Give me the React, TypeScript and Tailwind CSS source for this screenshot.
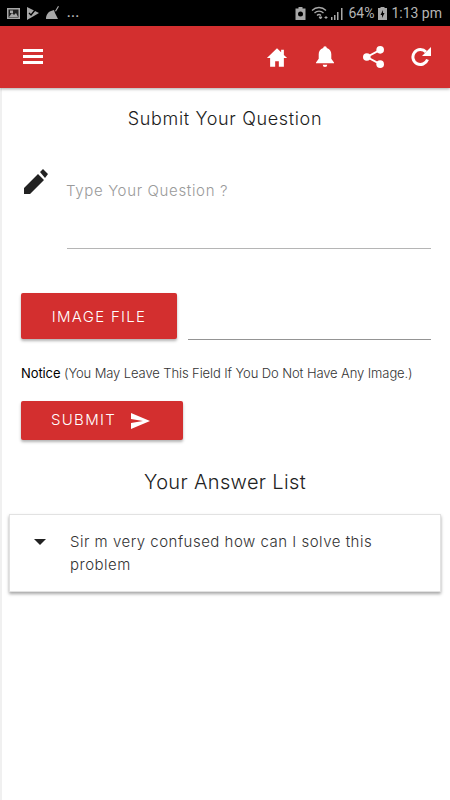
import React from "react";

const F = "font-['Inter','Open_Sans',sans-serif]";

function StatusBar() {
  return (
    <div className="h-[26px] bg-black flex items-center justify-between pl-[7px] pr-[8px] text-[#b5b5b5]">
      <div className="flex items-center gap-[7px]">
        <svg width="13" height="13" viewBox="0 0 13 13"><path fill="#a8a8a8" d="M0 1h13v11H0z" /><path fill="#222" d="M1.500 2.500h10v8h-10z" /><path fill="#a8a8a8" d="M2 10l3-4 2 2 2-2 2 4zM3 3.500h3V6H3z" /></svg>
        <svg width="12" height="13" viewBox="0 0 12 13"><path fill="#a8a8a8" d="M0 0l12 6-12 7z" /><path stroke="#000" strokeWidth="1.300" fill="none" d="M2 6l2 2 4-5" /></svg>
        <svg width="14" height="14" viewBox="0 0 14 14"><path fill="#a8a8a8" d="M0 13c0-4 2-7 5-8l3-1 1 3 1 2 2 4zM9 5l3-5 1 .5-3 5z" /></svg>
        <span className="font-['Roboto',sans-serif] text-[12px] leading-none font-bold tracking-[0.8px] -mt-[1px]">...</span>
      </div>
      <div className="flex items-center font-['Roboto',sans-serif] text-[14px] leading-none">
        <svg width="11" height="13" viewBox="0 0 10 13" className="mr-[5px]"><path fill="#a8a8a8" d="M3 0h4v1.500h3V13H0V1.500h3z" /><circle cx="5" cy="7" r="2.500" fill="#000" /></svg>
        <svg width="20" height="14" viewBox="0 0 20 14"><path d="M1 4.500c4-4 10-4 14 0M3.500 7c2.500-2.500 6.500-2.500 9 0M6 9.500c1.300-1.300 2.700-1.300 4 0" stroke="#a8a8a8" strokeWidth="1.300" fill="none" /><path d="M8 11l1.500 2L11 11z M15 10v3M13.500 11.500h3" stroke="#a8a8a8" fill="#a8a8a8" /></svg>
        <svg width="12" height="13" viewBox="0 0 12 13" className="mr-[5px]"><path fill="#a8a8a8" d="M0 10h1.500v3H0zM3 8h1.500v5H3zM6 5h1.500v8H6zM10 1h1.500v12H10z" /></svg>
        <span>64%</span>
        <svg width="9" height="13" viewBox="0 0 9 13" className="mx-[4px]"><path fill="#a8a8a8" d="M2.500 0h4v1H9v12H0V1h2.500z" /><path fill="#000" d="M5 3L2.500 8H4v3l2.500-5H5z" /></svg>
        <span>1:13 pm</span>
      </div>
    </div>
  );
}

function HeaderBar() {
  return (
    <div className="h-[62px] bg-[#d32f2f] flex items-center justify-between pl-[23px] pr-[19px] shadow-[0_1px_3px_rgba(0,0,0,0.35)] relative">
      <div className="flex flex-col gap-[3px] mt-[-1px]">
        <div className="w-[20px] h-[3px] bg-white" />
        <div className="w-[20px] h-[3px] bg-white" />
        <div className="w-[20px] h-[3px] bg-white" />
      </div>
      <div className="flex items-center">
        <svg width="22" height="19" viewBox="0 0 24 20"><path fill="#fff" d="M12 0L1 10.500h3.500V20h5.500v-6h4v6h5.500v-9.500H23l-3.500-3.300V1.500h-3v2.800z" /></svg>
        <svg width="18" height="22" viewBox="0 0 20 24" className="ml-[28px]"><path fill="#fff" d="M10 0a2 2 0 0 1 2 2c3.500 1 5 4 5 7v5l3 4v1H0v-1l3-4V9c0-3 1.500-6 5-7a2 2 0 0 1 2-2zM7.500 20.500h5a2.500 2.500 0 0 1-5 0z" /></svg>
        <svg width="21" height="22" viewBox="0 0 22 23" className="ml-[29px]"><circle cx="4" cy="11.500" r="4" fill="#fff" /><circle cx="18" cy="4" r="4" fill="#fff" /><circle cx="18" cy="19" r="4" fill="#fff" /><path d="M4 11.500L18 4M4 11.500L18 19" stroke="#fff" strokeWidth="2" /></svg>
        <svg width="20" height="20" viewBox="0 0 20 20" className="ml-[27px]"><path d="M16.500 12.500A7.500 7.500 0 1 1 15 5" fill="none" stroke="#fff" strokeWidth="3" /><path fill="#fff" d="M20 0v9h-9z" /></svg>
      </div>
    </div>
  );
}

export default function App() {
  return (
    <div className={`w-[450px] h-[800px] bg-white overflow-hidden ${F} text-[#222] flex flex-col`}>
      <StatusBar />
      <HeaderBar />
      <div className="flex-1 border-l-2 border-[#f0f0f0] pt-[20px]">
        <div className="-ml-[2px]">
          <h1 className="text-center text-[18px] leading-[22px] font-light tracking-[0.65px] text-[#1c1c1c]">Submit Your Question</h1>
          <div className="mt-[39px] pl-[24px] pr-[19px] flex items-start">
            <svg width="24" height="25" viewBox="0 0 24 25" className="shrink-0"><path fill="#222" d="M0 25v-6L14 5l6 6L6 25zM16 3l3-3 5 5-3 4z" /></svg>
            <div className="ml-[19px] flex-1">
              <div className="h-[38px] pt-[12px] -ml-[1px] text-[15px] leading-[20px] font-light text-[#9a9a9a] tracking-[0.65px]">Type Your Question ?</div>
              <div className="mt-[41px] h-[1px] bg-[#b5b5b5]" />
            </div>
          </div>
          <div className="mt-[44px] pl-[21px] pr-[19px] flex items-end">
            <button className="w-[156px] h-[46px] pt-[2px] rounded-[2px] bg-[#d32f2f] text-white text-[15px] font-light tracking-[1.3px] shadow-[0_2px_3px_rgba(0,0,0,0.3)]">IMAGE FILE</button>
            <div className="ml-[11px] -mb-[1px] flex-1 h-[1px] bg-[#949494]" />
          </div>
          <p className="mt-[26px] ml-[21px] text-[13px] leading-[16px] font-light whitespace-nowrap text-[#333] tracking-[-0.1px]"><span className="font-normal text-black">Notice</span> (You May Leave This Field If You Do Not Have Any Image.)</p>
          <button className="mt-[20px] ml-[21px] w-[162px] h-[39px] rounded-[2px] bg-[#d32f2f] text-white flex items-center pl-[30px] shadow-[0_2px_3px_rgba(0,0,0,0.3)]">
            <span className="text-[15px] font-light tracking-[1.3px]">SUBMIT</span>
            <svg width="19" height="16" viewBox="0 0 19 16" className="ml-[15px]"><path fill="#fff" d="M0 0l19 8-19 8v-6l12-2-12-2z" /></svg>
          </button>
          <h2 className="mt-[30px] text-center text-[20px] leading-[24px] font-light tracking-[0.35px] text-[#222]">Your Answer List</h2>
          <div className="mt-[20px] mx-[9px] h-[78px] border border-[#e2e2e2] bg-white shadow-[0_2px_3px_rgba(0,0,0,0.35)] flex items-start">
            <svg width="12" height="6" viewBox="0 0 12 6" className="mt-[24px] ml-[24px] shrink-0"><path fill="#222" d="M0 0h12L6 6z" /></svg>
            <p className="ml-[24px] mt-[15px] w-[340px] text-[15px] leading-[23px] font-light text-[#333] tracking-[0.5px]">Sir m very confused how can I solve this problem</p>
          </div>
        </div>
      </div>
    </div>
  );
}
